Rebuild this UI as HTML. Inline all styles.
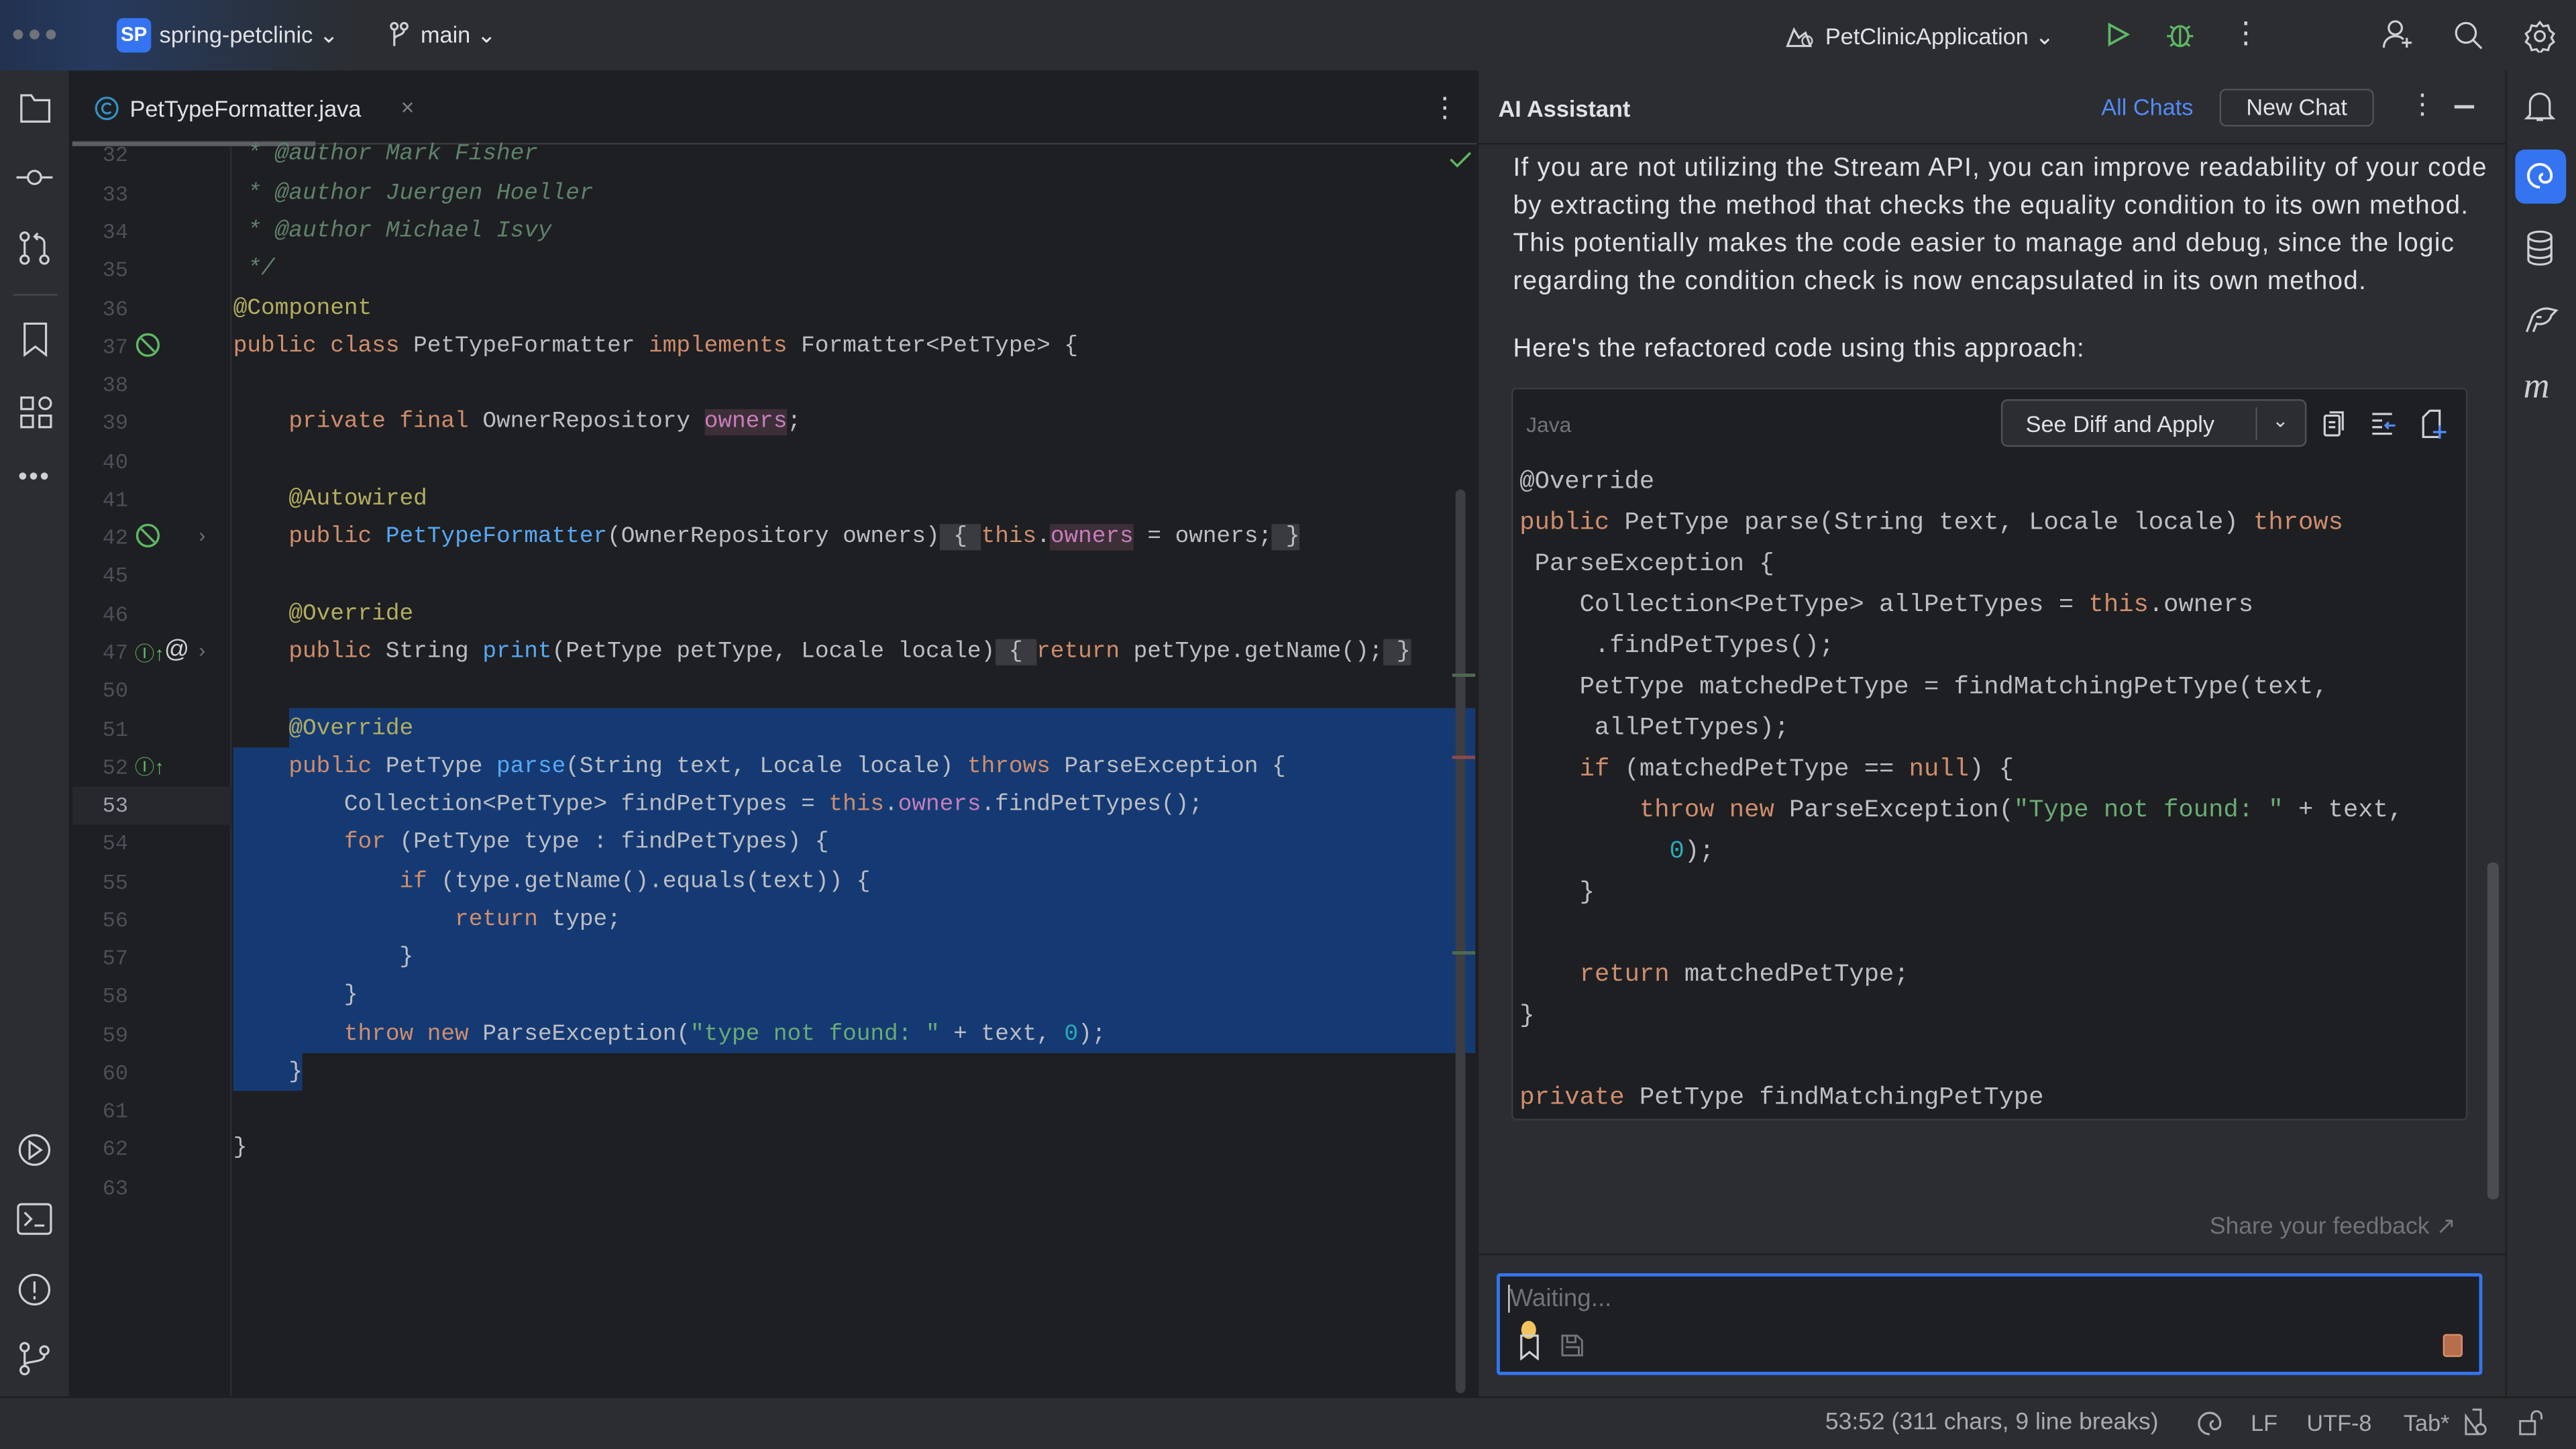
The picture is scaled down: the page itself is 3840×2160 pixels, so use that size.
<!DOCTYPE html>
<html><head><meta charset="utf-8"><style>
*{margin:0;padding:0;box-sizing:border-box}
html,body{width:3840px;height:2160px;overflow:hidden;background:#1e1f22}
#w{position:absolute;left:0;top:0;width:1568px;height:882px;transform:scale(2.44898);transform-origin:0 0;font-family:"Liberation Sans",sans-serif;color:#dfe1e5;background:#1e1f22}
.a{position:absolute}
.m{font-family:"Liberation Mono",monospace;white-space:pre}
.cl{position:absolute;left:142px;font-size:14.05px;height:23.27px;line-height:23.27px;color:#bcbec4;margin-top:2px}
.ln{position:absolute;left:44px;width:34px;text-align:right;font-family:"Liberation Mono",monospace;font-size:13px;color:#4b5059;height:23.27px;line-height:23.27px;margin-top:2px}
.k{color:#cf8e6d}.an{color:#b3ae60}.s{color:#6aab73}.n{color:#2aacb8}.f{color:#c77dbb}.md{color:#56a8f5}.c{color:#5f826b;font-style:italic}
.fb{background:#393b40}
.ac{position:absolute;left:925px;font-size:15.2px;line-height:25px;color:#bcbec4;margin-top:2px}
.ic{stroke:#ced0d6;fill:none;stroke-width:1.3}
</style></head><body><div id="w">
<div class="a" style="left:0;top:0;width:1568px;height:43px;background:linear-gradient(90deg,#22324f 0,#263a5e 60px,#2b2d30 220px,#2b2d30)"></div>
<div class="a" style="left:8px;top:18px;width:6px;height:6px;border-radius:3px;background:#6f737a;box-shadow:10px 0 #6f737a,20px 0 #6f737a"></div>
<div class="a" style="left:71px;top:11px;width:21px;height:21px;border-radius:4px;background:#3574f0;color:#fff;font-size:12px;font-weight:bold;line-height:21px;text-align:center">SP</div>
<div class="a" style="left:97px;top:13px;font-size:14px;color:#dfe1e5">spring-petclinic ⌄</div>
<svg class="a" style="left:236px;top:13px" width="14" height="16"><circle class="ic" cx="4" cy="3" r="2"/><circle class="ic" cx="10" cy="3" r="2"/><path class="ic" d="M4 5v10M10 5c0 4-6 3-6 6"/></svg>
<div class="a" style="left:256px;top:13px;font-size:14px">main ⌄</div>
<svg class="a" style="left:1086px;top:12px" width="20" height="20"><path class="ic" d="M2 16h14l-3-8-4 3-3-5z" stroke="#5fb865"/><circle cx="14" cy="13" r="3" fill="none" stroke="#ced0d6"/></svg>
<div class="a" style="left:1111px;top:14px;font-size:14px">PetClinicApplication ⌄</div>
<svg class="a" style="left:1281px;top:13px" width="16" height="16"><path d="M3 2l11 6-11 6z" fill="none" stroke="#5fb865" stroke-width="1.5"/></svg>
<svg class="a" style="left:1318px;top:12px" width="18" height="18"><ellipse cx="9" cy="10" rx="5" ry="6" fill="none" stroke="#5fb865" stroke-width="1.4"/><path d="M1 10h3M14 10h3M3 4l3 2M15 4l-3 2M3 16l3-2M15 16l-3-2M9 5v11" stroke="#5fb865" stroke-width="1.3"/></svg>
<div class="a" style="left:1358px;top:10px;font-size:18px;color:#ced0d6">⋮</div>
<svg class="a" style="left:1450px;top:11px" width="20" height="20"><circle class="ic" cx="8" cy="6" r="4"/><path class="ic" d="M1 18c0-5 4-7 7-7s4 1 5 2M15 12v6M12 15h6"/></svg>
<svg class="a" style="left:1493px;top:12px" width="20" height="20"><circle class="ic" cx="8" cy="8" r="6" stroke-width="1.6"/><path class="ic" d="M12.5 12.5l5 5" stroke-width="1.8"/></svg>
<svg class="a" style="left:1536px;top:12px" width="20" height="20"><circle class="ic" cx="10" cy="10" r="3"/><path class="ic" d="M10 1.5l2 2.5 3-.5 1 3 2.5 2-1.5 2.5 1.5 2.5-2.5 2-1 3-3-.5-2 2.5-2-2.5-3 .5-1-3-2.5-2 1.5-2.5-1.5-2.5 2.5-2 1-3 3 .5z"/></svg>

<div class="a" style="left:0;top:43px;width:43px;height:807px;background:#2b2d30;border-right:1px solid #1e1f22"></div>
<svg class="a" style="left:11px;top:56px" width="22" height="20"><path class="ic" d="M2 2h6l2 3h9v13H2z"/></svg>
<svg class="a" style="left:9px;top:98px" width="24" height="20"><circle class="ic" cx="12" cy="10" r="4"/><path class="ic" d="M1 10h7M16 10h7"/></svg>
<svg class="a" style="left:11px;top:140px" width="22" height="22"><circle class="ic" cx="4" cy="4" r="2.5"/><circle class="ic" cx="4" cy="18" r="2.5"/><circle class="ic" cx="16" cy="18" r="2.5"/><path class="ic" d="M4 7v8M16 15V8c0-3-3-4-6-4M12 2l-2 2 2 2"/></svg>
<div class="a" style="left:8px;top:179px;width:27px;height:1px;background:#43454a"></div>
<svg class="a" style="left:13px;top:196px" width="18" height="22"><path class="ic" d="M2 1h13v19l-6.5-5L2 20z"/></svg>
<svg class="a" style="left:11px;top:240px" width="22" height="22"><rect class="ic" x="2" y="2" width="7" height="7"/><rect class="ic" x="2" y="13" width="7" height="7"/><rect class="ic" x="13" y="13" width="7" height="7"/><circle class="ic" cx="16.5" cy="5.5" r="3.5"/></svg>
<div class="a" style="left:11px;top:282px;font-size:16px;color:#ced0d6;letter-spacing:1px">•••</div>
<svg class="a" style="left:10px;top:689px" width="22" height="22"><circle class="ic" cx="11" cy="11" r="9"/><path class="ic" d="M8 6l7 5-7 5z"/></svg>
<svg class="a" style="left:10px;top:732px" width="22" height="20"><rect class="ic" x="1" y="1" width="20" height="18" rx="2"/><path class="ic" d="M5 6l4 4-4 4M11 14h6"/></svg>
<svg class="a" style="left:10px;top:774px" width="22" height="22"><circle class="ic" cx="11" cy="11" r="9"/><path class="ic" d="M11 6v7M11 15v2"/></svg>
<svg class="a" style="left:11px;top:816px" width="20" height="22"><circle class="ic" cx="4" cy="4" r="2.5"/><circle class="ic" cx="4" cy="18" r="2.5"/><circle class="ic" cx="16" cy="6" r="2.5"/><path class="ic" d="M4 7v8M16 9c0 5-12 3-12 6"/></svg>

<div class="a" style="left:44px;top:43px;width:855px;height:45px;background:#1e1f22;border-bottom:1px solid #393b40"></div>
<div class="a" style="left:44px;top:86px;width:148px;height:3px;background:#7a7e85;opacity:.6"></div>
<svg class="a" style="left:57px;top:58px" width="16" height="16"><circle cx="8" cy="8" r="6.5" fill="none" stroke="#3592c4" stroke-width="1.3"/><path d="M10.5 6a3 3 0 1 0 0 4" fill="none" stroke="#3592c4" stroke-width="1.3"/></svg>
<div class="a" style="left:79px;top:58px;font-size:14px;color:#dfe1e5">PetTypeFormatter.java</div>
<div class="a" style="left:244px;top:57px;font-size:14px;color:#7a7e85">×</div>
<div class="a" style="left:871px;top:56px;font-size:17px;color:#ced0d6">⋮</div>
<svg class="a" style="left:882px;top:91px" width="14" height="12"><path d="M1 6l4 4 8-8" fill="none" stroke="#5fb865" stroke-width="1.4"/></svg>

<div class="a" style="left:140px;top:89px;width:1px;height:761px;background:#2b2d30"></div>
<div class="a" style="left:44px;top:479px;width:97px;height:23.27px;background:#26282e"></div>

<div class="a" style="left:176px;top:431px;width:722px;height:23.5px;background:#153a73"></div>
<div class="a" style="left:142px;top:454.5px;width:756px;height:186px;background:#153a73"></div>
<div class="a" style="left:142px;top:640.5px;width:42px;height:23px;background:#153a73"></div>

<div class="a" style="left:886px;top:298px;width:6px;height:550px;border-radius:3px;background:#3c3e43"></div>
<div class="a" style="left:884px;top:410px;width:14px;height:2px;background:#4e6a52"></div>
<div class="a" style="left:884px;top:460px;width:14px;height:2px;background:#8a4a4a"></div>
<div class="a" style="left:884px;top:579px;width:14px;height:2px;background:#4e6a52"></div>

<div class="ln" style="top:81.4px">32</div><div class="ln" style="top:104.7px">33</div><div class="ln" style="top:128px">34</div><div class="ln" style="top:151.2px">35</div><div class="ln" style="top:174.5px">36</div><div class="ln" style="top:197.8px">37</div><div class="ln" style="top:221px">38</div><div class="ln" style="top:244.3px">39</div><div class="ln" style="top:267.6px">40</div><div class="ln" style="top:290.8px">41</div><div class="ln" style="top:314.1px">42</div><div class="ln" style="top:337.4px">45</div><div class="ln" style="top:360.7px">46</div><div class="ln" style="top:383.9px">47</div><div class="ln" style="top:407.2px">50</div><div class="ln" style="top:430.5px">51</div><div class="ln" style="top:453.7px">52</div><div class="ln" style="top:477px;color:#a1a3ab">53</div><div class="ln" style="top:500.3px">54</div><div class="ln" style="top:523.5px">55</div><div class="ln" style="top:546.8px">56</div><div class="ln" style="top:570.1px">57</div><div class="ln" style="top:593.3px">58</div><div class="ln" style="top:616.6px">59</div><div class="ln" style="top:639.9px">60</div><div class="ln" style="top:663.1px">61</div><div class="ln" style="top:686.4px">62</div><div class="ln" style="top:709.7px">63</div>
<svg class="a" style="left:82px;top:202px" width="17" height="17"><circle cx="8" cy="8" r="6.5" fill="none" stroke="#5fb865" stroke-width="1.4"/><path d="M4 4l8 8" stroke="#5fb865" stroke-width="1.4"/></svg>
<svg class="a" style="left:82px;top:318px" width="17" height="17"><circle cx="8" cy="8" r="6.5" fill="none" stroke="#5fb865" stroke-width="1.4"/><path d="M4 4l8 8" stroke="#5fb865" stroke-width="1.4"/></svg>
<div class="a" style="left:121px;top:319px;font-size:12px;color:#6f737a">›</div>
<div class="a" style="left:82px;top:389px;font-size:12px;color:#5fb865">Ⓘ↑</div>
<div class="a" style="left:100px;top:387px;font-size:15px;color:#ced0d6">@</div>
<div class="a" style="left:121px;top:389px;font-size:12px;color:#6f737a">›</div>
<div class="a" style="left:82px;top:458px;font-size:12px;color:#5fb865">Ⓘ↑</div>

<div class="cl m" style="top:81.4px"><span class="c"> * @author Mark Fisher</span></div>
<div class="cl m" style="top:104.7px"><span class="c"> * @author Juergen Hoeller</span></div>
<div class="cl m" style="top:128px"><span class="c"> * @author Michael Isvy</span></div>
<div class="cl m" style="top:151.2px"><span class="c"> */</span></div>
<div class="cl m" style="top:174.5px"><span class="an">@Component</span></div>
<div class="cl m" style="top:197.8px"><span class="k">public class</span> PetTypeFormatter <span class="k">implements</span> Formatter&lt;PetType&gt; {</div>
<div class="cl m" style="top:244.3px">    <span class="k">private final</span> OwnerRepository <span class="f" style="background:#3d2f38">owners</span>;</div>
<div class="cl m" style="top:290.8px">    <span class="an">@Autowired</span></div>
<div class="cl m" style="top:314.1px">    <span class="k">public</span> <span class="md">PetTypeFormatter</span>(OwnerRepository owners)<span class="fb"> { </span><span class="k">this</span>.<span class="f" style="background:#3d2f38">owners</span> = owners;<span class="fb"> }</span></div>
<div class="cl m" style="top:360.7px">    <span class="an">@Override</span></div>
<div class="cl m" style="top:383.9px">    <span class="k">public</span> String <span class="md">print</span>(PetType petType, Locale locale)<span class="fb"> { </span><span class="k">return</span> petType.getName();<span class="fb"> }</span></div>
<div class="cl m" style="top:430.5px">    <span class="an">@Override</span></div>
<div class="cl m" style="top:453.7px">    <span class="k">public</span> PetType <span class="md">parse</span>(String text, Locale locale) <span class="k">throws</span> ParseException {</div>
<div class="cl m" style="top:477px">        Collection&lt;PetType&gt; findPetTypes = <span class="k">this</span>.<span class="f">owners</span>.findPetTypes();</div>
<div class="cl m" style="top:500.3px">        <span class="k">for</span> (PetType type : findPetTypes) {</div>
<div class="cl m" style="top:523.5px">            <span class="k">if</span> (type.getName().equals(text)) {</div>
<div class="cl m" style="top:546.8px">                <span class="k">return</span> type;</div>
<div class="cl m" style="top:570.1px">            }</div>
<div class="cl m" style="top:593.3px">        }</div>
<div class="cl m" style="top:616.6px">        <span class="k">throw new</span> ParseException(<span class="s">"type not found: "</span> + text, <span class="n">0</span>);</div>
<div class="cl m" style="top:639.9px">    }</div>
<div class="cl m" style="top:686.4px">}</div>

<div class="a" style="left:899px;top:43px;width:626px;height:807px;background:#2b2d30;border-left:1px solid #1e1f22"></div>
<div class="a" style="left:899px;top:87px;width:626px;height:1px;background:#1e1f22"></div>
<div class="a" style="left:912px;top:58px;font-size:14px;font-weight:bold;color:#dfe1e5">AI Assistant</div>
<div class="a" style="left:1279px;top:57px;font-size:14px;color:#548af7">All Chats</div>
<div class="a" style="left:1351px;top:54px;width:94px;height:23px;border:1px solid #4e5157;border-radius:4px;font-size:14px;text-align:center;line-height:21px">New Chat</div>
<div class="a" style="left:1466px;top:54px;font-size:17px;color:#ced0d6">⋮</div>
<div class="a" style="left:1494px;top:64px;width:12px;height:1.5px;background:#ced0d6"></div>
<div class="a" style="left:921px;top:91px;font-size:15.7px;letter-spacing:0.55px;line-height:23px;color:#dfe1e5;white-space:nowrap">If you are not utilizing the Stream API, you can improve readability of your code<br>by extracting the method that checks the equality condition to its own method.<br>This potentially makes the code easier to manage and debug, since the logic<br>regarding the condition check is now encapsulated in its own method.</div>
<div class="a" style="left:921px;top:204px;font-size:15.7px;letter-spacing:0.4px;color:#dfe1e5">Here's the refactored code using this approach:</div>
<div class="a" style="left:920px;top:236px;width:582px;height:446px;background:#1e1f22;border:1px solid #393b40;border-radius:3px;overflow:hidden"></div>
<div class="a" style="left:929px;top:251px;font-size:13px;color:#6f737a">Java</div>
<div class="a" style="left:1218px;top:243px;width:186px;height:29px;border:1px solid #4e5157;border-radius:4px;background:#2b2d30"></div>
<div class="a" style="left:1233px;top:250px;font-size:14px;color:#dfe1e5">See Diff and Apply</div>
<div class="a" style="left:1373px;top:248px;width:1px;height:20px;background:#4e5157"></div>
<div class="a" style="left:1383px;top:249px;font-size:12px;color:#ced0d6">⌄</div>
<svg class="a" style="left:1413px;top:249px" width="16" height="18"><rect class="ic" x="2" y="4" width="9" height="12" rx="1"/><path class="ic" d="M5 2h8v11M4.5 8h4M4.5 11h4"/></svg>
<svg class="a" style="left:1442px;top:249px" width="18" height="18"><path class="ic" d="M2 3h12M2 7h6M2 11h6M2 15h12"/><path d="M16 10h-6M12 8l-2 2 2 2" stroke="#548af7" fill="none" stroke-width="1.3"/></svg>
<svg class="a" style="left:1472px;top:248px" width="18" height="20"><path class="ic" d="M7 2h6v16H3V6z"/><path d="M13 11v8M9 15h8" stroke="#548af7" stroke-width="1.4"/></svg>
<div class="ac m" style="top:279px">@Override</div>
<div class="ac m" style="top:304px"><span class="k">public</span> PetType parse(String text, Locale locale) <span class="k">throws</span></div>
<div class="ac m" style="top:329px"> ParseException {</div>
<div class="ac m" style="top:354px">    Collection&lt;PetType&gt; allPetTypes = <span class="k">this</span>.owners</div>
<div class="ac m" style="top:379px">     .findPetTypes();</div>
<div class="ac m" style="top:404px">    PetType matchedPetType = findMatchingPetType(text,</div>
<div class="ac m" style="top:429px">     allPetTypes);</div>
<div class="ac m" style="top:454px">    <span class="k">if</span> (matchedPetType == <span class="k">null</span>) {</div>
<div class="ac m" style="top:479px">        <span class="k">throw new</span> ParseException(<span class="s">"Type not found: "</span> + text,</div>
<div class="ac m" style="top:504px">          <span class="n">0</span>);</div>
<div class="ac m" style="top:529px">    }</div>
<div class="ac m" style="top:579px">    <span class="k">return</span> matchedPetType;</div>
<div class="ac m" style="top:604px">}</div>
<div class="ac m" style="top:654px"><span class="k">private</span> PetType findMatchingPetType</div>
<div class="a" style="left:1514px;top:525px;width:7px;height:205px;border-radius:3px;background:#4a4c52"></div>
<div class="a" style="left:1345px;top:739px;font-size:14.5px;color:#6f737a">Share your feedback ↗</div>
<div class="a" style="left:899px;top:763px;width:626px;height:1px;background:#1e1f22"></div>
<div class="a" style="left:911px;top:775px;width:600px;height:62px;border:2px solid #3574f0;border-radius:2px;background:#1e1f22"></div>
<div class="a" style="left:918px;top:782px;width:1px;height:17px;background:#ced0d6"></div>
<div class="a" style="left:919px;top:782px;font-size:15px;color:#6f737a">Waiting...</div>
<div class="a" style="left:926px;top:804px;width:9px;height:11px;border-radius:50%;background:#f2c55c"></div>
<svg class="a" style="left:924px;top:812px" width="16" height="16"><path class="ic" d="M2 1h10v14l-5-4-5 4z"/></svg>
<svg class="a" style="left:950px;top:812px" width="14" height="14"><path d="M1 1h9l3 3v9H1z M4 1v4h5V1M3 8h8v5" fill="none" stroke="#6f737a" stroke-width="1.2"/></svg>
<div class="a" style="left:1487px;top:812px;width:12px;height:14px;border-radius:2px;background:#b66e4d;border:1px solid #db8e6a"></div>

<div class="a" style="left:1525px;top:43px;width:43px;height:807px;background:#2b2d30;border-left:1px solid #1e1f22"></div>
<svg class="a" style="left:1536px;top:54px" width="20" height="22"><path class="ic" d="M4 16V9a6 6 0 0 1 12 0v7l2 2H2zM8 19h4"/></svg>
<div class="a" style="left:1531px;top:91px;width:31px;height:33px;border-radius:6px;background:#3574f0"></div>
<svg class="a" style="left:1536px;top:97px" width="20" height="20"><path d="M10 17a7 7 0 1 1 7-7c0 3-2 4-4 4s-3-2-3-3 1-2 2-2" fill="none" stroke="#fff" stroke-width="1.6"/></svg>
<svg class="a" style="left:1537px;top:140px" width="18" height="22"><ellipse class="ic" cx="9" cy="4" rx="7" ry="3"/><path class="ic" d="M2 4v14c0 4 14 4 14 0V4M2 9c0 4 14 4 14 0M2 14c0 4 14 4 14 0"/></svg>
<svg class="a" style="left:1536px;top:184px" width="22" height="20"><path class="ic" d="M2 18l3-8c1-4 6-7 11-6l4 1-3 3c-1 4-5 6-9 5l-2 5M8 9h3"/></svg>
<div class="a" style="left:1536px;top:222px;font-size:22px;font-style:italic;color:#ced0d6;font-family:'Liberation Serif',serif">m</div>

<div class="a" style="left:0;top:850px;width:1568px;height:32px;background:#2b2d30;border-top:1px solid #1e1f22"></div>
<div class="a" style="left:1111px;top:858px;font-size:14.5px;color:#a8abb0;white-space:nowrap">53:52 (311 chars, 9 line breaks)</div>
<svg class="a" style="left:1337px;top:858px" width="16" height="16"><path d="M8 15a6.5 6.5 0 1 1 6.5-6.5c0 2.5-2 3.5-3.5 3.5S8.5 10 8.5 9s1-2 2-2" fill="none" stroke="#a8abb0" stroke-width="1.3"/></svg>
<div class="a" style="left:1370px;top:858px;font-size:14px;color:#a8abb0">LF</div>
<div class="a" style="left:1404px;top:858px;font-size:14px;color:#a8abb0">UTF-8</div>
<div class="a" style="left:1463px;top:858px;font-size:14px;color:#a8abb0">Tab*</div>
<svg class="a" style="left:1499px;top:857px" width="16" height="18"><path d="M6 1h5v9M10 16H2V5z" fill="none" stroke="#a8abb0" stroke-width="1.2"/><circle cx="11" cy="13" r="3" fill="none" stroke="#a8abb0" stroke-width="1.2"/></svg>
<svg class="a" style="left:1533px;top:857px" width="16" height="18"><rect x="1" y="8" width="9" height="8" fill="none" stroke="#a8abb0" stroke-width="1.2"/><path d="M8 8V5a3 3 0 0 1 6 0v2" fill="none" stroke="#a8abb0" stroke-width="1.2"/></svg>
</div></body></html>
